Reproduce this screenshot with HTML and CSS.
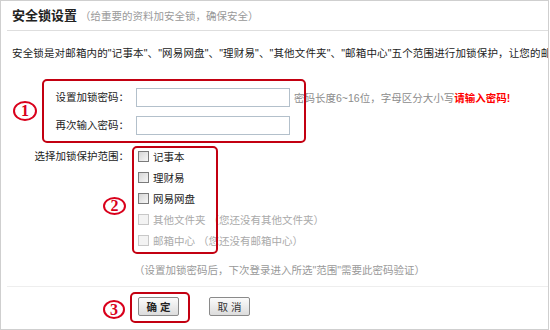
FILE: index.html
```html
<!DOCTYPE html>
<html lang="zh-CN">
<head>
    <meta charset="UTF-8">
    <title>安全锁设置</title>
    <link rel="stylesheet" href="styles.css">
</head>
<body>
    <div class="panel">
        <div class="panel-head">
            <span class="panel-title">安全锁设置</span>
            <span class="panel-sub">（给重要的资料加安全锁，确保安全）</span>
        </div>

        <p class="intro">安全锁是对邮箱内的"记事本"、"网易网盘"、"理财易"、"其他文件夹"、"邮箱中心"五个范围进行加锁保护，让您的邮件信息更安全。</p>

        <div class="lock-form">
            <label class="f-label">设置加锁密码：</label>
            <div class="f-field">
                <input class="text-input" type="password">
                <span class="hint">密码长度6~16位，字母区分大小写</span><span class="err">请输入密码!</span>
            </div>

            <label class="f-label">再次输入密码：</label>
            <div class="f-field">
                <input class="text-input" type="password">
            </div>

            <label class="f-label scope-label">选择加锁保护范围：</label>
            <ul class="scope-list">
                <li><input class="chk" type="checkbox">记事本</li>
                <li><input class="chk" type="checkbox">理财易</li>
                <li><input class="chk" type="checkbox">网易网盘</li>
                <li class="disabled"><input class="chk" type="checkbox" disabled>其他文件夹<span class="why">（您还没有其他文件夹）</span></li>
                <li class="disabled"><input class="chk" type="checkbox" disabled>邮箱中心<span class="why">（您还没有邮箱中心）</span></li>
            </ul>
        </div>

        <p class="note">（设置加锁密码后，下次登录进入所选"范围"需要此密码验证）</p>

        <div class="actions">
            <button class="btn btn-ok">确 定</button>
            <button class="btn">取 消</button>
        </div>

        <!-- annotation marks drawn over the form -->
        <div class="mark-box box-1"></div>
        <div class="mark-box box-2"></div>
        <div class="mark-box box-3"></div>
        <span class="mark-num num-1">1</span>
        <span class="mark-num num-2">2</span>
        <span class="mark-num num-3">3</span>
    </div>
</body>
</html>
```

FILE: styles.css
```css
body {
    margin: 0;
    background: #fff;
    font-family: "Liberation Sans", "Noto Sans CJK SC", sans-serif;
    font-size: 10.5px;
    color: #222;
}
.panel {
    position: relative;
    box-sizing: border-box;
    width: 549px;
    height: 330px;
    border: 1px solid #cfcfcf;
    overflow: hidden;
}
.panel-head {
    height: 29px;
    line-height: 29px;
    margin-left: 6px;
    padding-left: 5px;
    border-bottom: 1px solid #dedede;
    white-space: nowrap;
}
.panel-title {
    font-size: 13px;
    font-weight: bold;
    color: #222;
}
.panel-sub {
    color: #999;
}
.intro {
    margin: 15px 0 0 11px;
    line-height: 14px;
    letter-spacing: 0.15px;
    white-space: nowrap;
}
.lock-form {
    display: grid;
    grid-template-columns: 128px 1fr;
    column-gap: 7px;
    margin-top: 23px;
}
.f-label {
    text-align: right;
    line-height: 28px;
    white-space: nowrap;
}
.f-field {
    display: flex;
    align-items: center;
    height: 28px;
    white-space: nowrap;
}
.text-input {
    box-sizing: border-box;
    width: 154px;
    height: 19px;
    margin: 0;
    border: 1px solid #b3c0cb;
    padding: 0 3px;
}
.hint {
    margin-left: 4px;
    color: #8c8c8c;
}
.err {
    color: #f00;
    font-weight: bold;
}
.scope-label {
    margin-top: 7px;
    line-height: 21px;
}
.scope-list {
    list-style: none;
    margin: 7px 0 0;
    padding: 0;
}
.scope-list li {
    display: flex;
    align-items: center;
    height: 21px;
    white-space: nowrap;
}
.chk {
    appearance: none;
    box-sizing: border-box;
    width: 11px;
    height: 11px;
    margin: 0 4px 0 2px;
    border: 1px solid #7b7b7b;
    background: linear-gradient(135deg, #d6d6d6, #f6f6f6);
}
.scope-list .disabled {
    color: #aaa;
}
.disabled .chk {
    border-color: #c8c8c8;
    background: #f3f3f3;
}
.why {
    margin-left: 3px;
}
.note {
    margin: 12px 0 0 133px;
    line-height: 14px;
    color: #999;
    white-space: nowrap;
}
.actions {
    margin: 9px 0 0 6px;
    padding: 10px 0 0 131px;
    border-top: 1px solid #eeeeee;
    display: flex;
    gap: 30px;
}
.btn {
    box-sizing: border-box;
    width: 41px;
    height: 19px;
    padding: 0;
    border: 1px solid #8a8a8a;
    border-radius: 2px;
    background: linear-gradient(#fbfbfb, #dcdcdc);
    font-family: inherit;
    font-size: 10.5px;
    color: #333;
}
.btn-ok {
    font-weight: bold;
    color: #222;
}
.mark-box {
    position: absolute;
    box-sizing: border-box;
    border: 2px solid #c30011;
    border-radius: 5px;
}
.box-1 {
    left: 41px;
    top: 78px;
    width: 264px;
    height: 64px;
}
.box-2 {
    left: 131px;
    top: 145px;
    width: 86px;
    height: 108px;
}
.box-3 {
    left: 129px;
    top: 291px;
    width: 60px;
    height: 31px;
}
.mark-num {
    position: absolute;
    box-sizing: border-box;
    border: 2px solid #d9001b;
    border-radius: 50%;
    color: #d9001b;
    font-family: "Liberation Serif", serif;
    font-size: 16px;
    font-weight: bold;
    line-height: 16px;
    text-align: center;
}
.num-1 {
    left: 12px;
    top: 100px;
    width: 24px;
    height: 20px;
}
.num-2 {
    left: 102px;
    top: 196px;
    width: 23px;
    height: 18px;
    line-height: 14px;
}
.num-3 {
    left: 102px;
    top: 299px;
    width: 22px;
    height: 19px;
    line-height: 15px;
}
```
